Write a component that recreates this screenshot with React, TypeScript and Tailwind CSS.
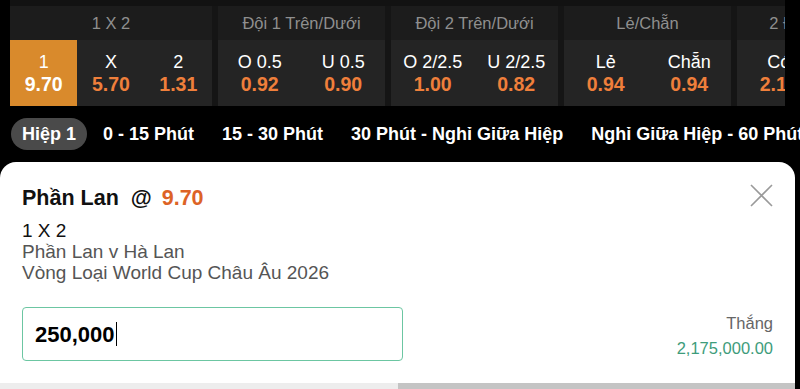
const groups = [
  {
    title: "1 X 2",
    width: "w-[202px]",
    cells: [
      { label: "1", odd: "9.70", active: true },
      { label: "X", odd: "5.70" },
      { label: "2", odd: "1.31" },
    ],
  },
  {
    title: "Đội 1 Trên/Dưới",
    width: "w-[167px]",
    cells: [
      { label: "O 0.5", odd: "0.92" },
      { label: "U 0.5", odd: "0.90" },
    ],
  },
  {
    title: "Đội 2 Trên/Dưới",
    width: "w-[167px]",
    cells: [
      { label: "O 2/2.5", odd: "1.00" },
      { label: "U 2/2.5", odd: "0.82" },
    ],
  },
  {
    title: "Lẻ/Chẵn",
    width: "w-[167px]",
    cells: [
      { label: "Lẻ", odd: "0.94" },
      { label: "Chẵn", odd: "0.94" },
    ],
  },
  {
    title: "2 Đội Ghi Bàn",
    width: "w-[167px]",
    cells: [
      { label: "Có", odd: "2.10" },
      { label: "Không", odd: "1.70" },
    ],
  },
];

const tabs = ["Hiệp 1", "0 - 15 Phút", "15 - 30 Phút", "30 Phút - Nghỉ Giữa Hiệp", "Nghỉ Giữa Hiệp - 60 Phút"];

function OddsStrip() {
  return (
    <div className="flex h-[106px] w-[800px] bg-black">
      <div className="w-[10px] shrink-0 bg-black" />
      <div className="flex w-[775px] shrink-0 flex-col overflow-hidden bg-[#151515]">
        <div className="h-[6px] bg-[#121212]" />
        <div className="flex gap-[6px]">
          {groups.map((g) => (
            <div key={g.title} className={`flex shrink-0 flex-col ${g.width}`}>
              <div className="flex h-[34px] items-center justify-center whitespace-nowrap bg-[#1c1c1c] text-[16.5px] text-[#8f8f8f]">
                {g.title}
              </div>
              <div className="flex h-[66px] bg-[#242424]">
                {g.cells.map((c) => (
                  <div
                    key={c.label}
                    className={`flex min-w-0 flex-1 flex-col items-center justify-center whitespace-nowrap ${
                      c.active ? "bg-[#d98a2c]" : ""
                    }`}
                  >
                    <div className="text-[18px] leading-[22px] text-white">{c.label}</div>
                    <div
                      className={`text-[19.5px] font-bold leading-[22px] ${
                        c.active ? "text-white" : "text-[#ef7f3b]"
                      }`}
                    >
                      {c.odd}
                    </div>
                  </div>
                ))}
              </div>
            </div>
          ))}
        </div>
      </div>
      <div className="w-[15px] shrink-0 bg-black" />
    </div>
  );
}

function Tabs() {
  return (
    <div className="flex h-[56px] items-center overflow-hidden whitespace-nowrap bg-black pl-[11px]">
      {tabs.map((t, i) => (
        <div
          key={t}
          className={`shrink-0 rounded-full text-[18px] font-bold text-white ${
            i === 0 ? "mr-[2px] flex h-[32px] items-center bg-[#4a4a4a] px-[11px]" : "px-[14px]"
          }`}
        >
          {t}
        </div>
      ))}
    </div>
  );
}

function BetSheet() {
  return (
    <div className="flex w-[800px] bg-black">
      <div className="relative flex h-[227px] w-[795px] flex-col rounded-t-[16px] bg-white">
        <button className="absolute right-[22px] top-[22px] text-[#9a9a9a]">
          <svg width="23" height="23" viewBox="0 0 23 23" fill="none" stroke="currentColor" strokeWidth="1.6">
            <path d="M1 1 L22 22 M22 1 L1 22" />
          </svg>
        </button>
        <div className="pl-[22px] pt-[23px]">
          <div className="text-[21.5px] font-bold leading-[26px] text-[#111]">
            Phần Lan <span className="ml-[6px]">@</span>
            <span className="ml-[10px] text-[#dd6326]">9.70</span>
          </div>
          <div className="mt-[9px] text-[19px] leading-[21px] text-[#111]">1 X 2</div>
          <div className="text-[19px] leading-[21px] text-[#555]">Phần Lan v Hà Lan</div>
          <div className="text-[19px] leading-[21px] text-[#555]">Vòng Loại World Cup Châu Âu 2026</div>
          <div className="mt-[24px] flex items-start justify-between pr-[22px]">
            <div className="flex h-[54px] w-[381px] items-center rounded-[4px] border border-[#6cc6a2] pl-[12px] text-[22px] font-bold text-black">
              250,000
              <span className="ml-[1px] inline-block h-[24px] w-[1px] bg-black" />
            </div>
            <div className="mt-[4px] flex flex-col items-end text-[16.5px] leading-[25px]">
              <div className="text-[#666]">Thắng</div>
              <div className="text-[#3e9c7b]">2,175,000.00</div>
            </div>
          </div>
        </div>
        <div className="mt-auto flex h-[6px]">
          <div className="w-[398px] bg-[#ededed]" />
          <div className="flex-1 bg-[#c4c4c4]" />
        </div>
      </div>
      <div className="flex-1 bg-black" />
    </div>
  );
}

export default function App() {
  return (
    <div
      className="h-[389px] w-[800px] overflow-hidden bg-black"
      style={{ fontFamily: '"Liberation Sans", Arial, sans-serif' }}
    >
      <OddsStrip />
      <Tabs />
      <BetSheet />
    </div>
  );
}
